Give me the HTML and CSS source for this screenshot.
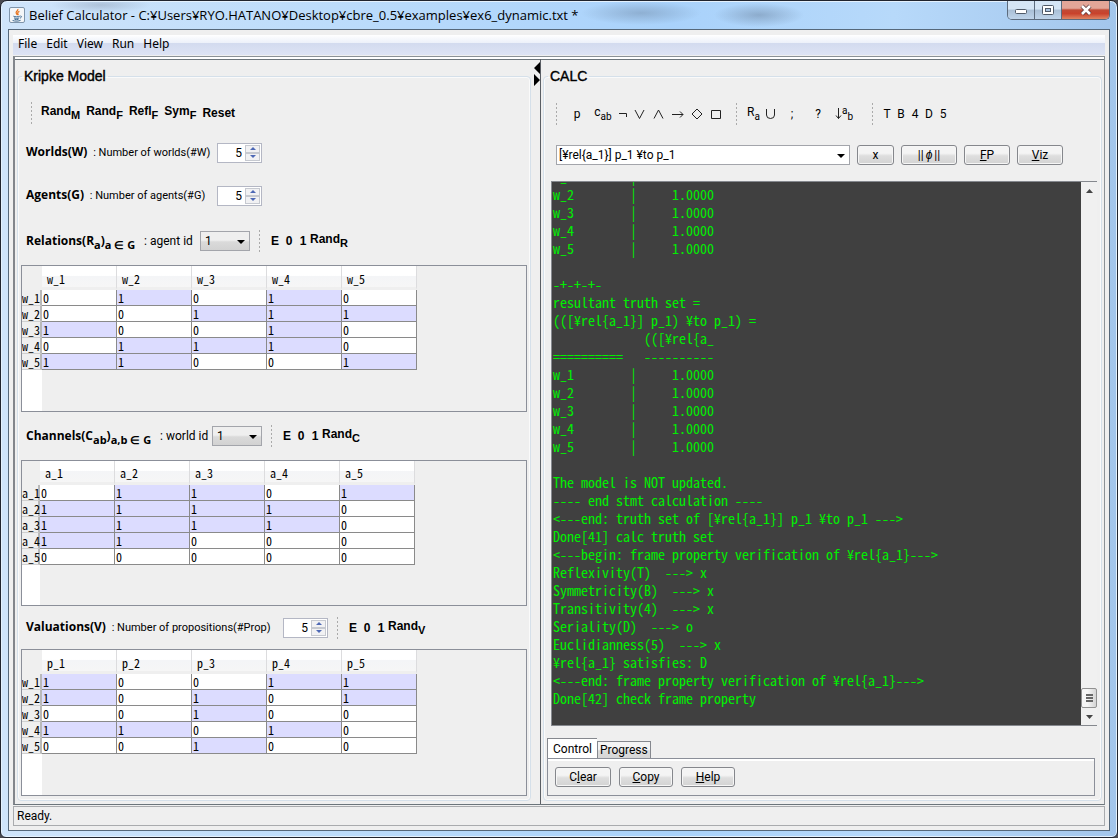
FILE: index.html
```html
<!DOCTYPE html>
<html lang="en">
<head>
<meta charset="utf-8">
<title>Belief Calculator</title>
<link rel="stylesheet" href="styles.css">
</head>
<body>
<div class="window">
  <header class="titlebar">
    <svg class="app-icon" viewBox="0 0 16 16" aria-hidden="true">
      <rect x="0.5" y="0.5" width="15" height="15" rx="1.5" fill="#f4f6f8" stroke="#7f95ab"/>
      <path d="M8.800 2c1 1.400-2.600 2.600-1.600 4.200.4.7 1 1 .8 2M10.400 4.400C8.600 5.200 8.400 6 9 6.800c.4.5.2 1-.2 1.400" fill="none" stroke="#e8731c" stroke-width="1.200"/>
      <path d="M4.400 9.200c1.600.8 4.800.8 6.400 0M5 10.900c1.400.6 4 .6 5.200 0M5.500 12.300c1.200.4 2.800.4 4 0M11.300 9c1.800-.2 1.400 1.600-.4 2.200M3.600 13.500c2.400.9 6.400.8 8-.2" fill="none" stroke="#3f6a92" stroke-width="1"/>
    </svg>
    <h1 class="title">Belief Calculator - C:¥Users¥RYO.HATANO¥Desktop¥cbre_0.5¥examples¥ex6_dynamic.txt *</h1>
    <div class="caption">
      <button class="cap cap-min" type="button" aria-label="Minimize"><svg width="14" height="12" viewBox="0 0 14 12"><rect x="1.500" y="5.500" width="11" height="4" rx="1" fill="#fff" stroke="#505a68"/></svg></button>
      <button class="cap cap-max" type="button" aria-label="Maximize"><svg width="14" height="12" viewBox="0 0 14 12"><rect x="1.500" y="1.500" width="11" height="9" rx="1" fill="#fff" stroke="#505a68"/><rect x="4.500" y="4.500" width="5" height="3" fill="#a9c3df" stroke="#505a68"/></svg></button>
      <button class="cap cap-close" type="button" aria-label="Close"><svg width="14" height="12" viewBox="0 0 14 12"><path d="M3 2l8 8M11 2l-8 8" stroke="#5e3a3c" stroke-width="4.200"/><path d="M3 2l8 8M11 2l-8 8" stroke="#fff" stroke-width="2.600"/></svg></button>
    </div>
  </header>

  <div class="client">
    <nav class="menubar">
      <button type="button">File</button>
      <button type="button">Edit</button>
      <button type="button">View</button>
      <button type="button">Run</button>
      <button type="button">Help</button>
    </nav>

    <main class="split">
      <fieldset class="panel model">
        <legend>Kripke Model</legend>
        <div class="tools model-tools">
          <span class="grip"></span>
          <button type="button">Rand<sub>M</sub></button>
          <button type="button">Rand<sub>F</sub></button>
          <button type="button">Refl<sub>F</sub></button>
          <button type="button">Sym<sub>F</sub></button>
          <button type="button" class="low">Reset</button>
        </div>

        <div class="row">
          <label class="label-count" for="worlds"><b>Worlds(W)</b> : Number of worlds(#W)</label>
          <span class="spinner"><input id="worlds" type="text" value="5"><span class="steps"><button type="button" class="up" aria-label="More worlds"></button><button type="button" class="down" aria-label="Fewer worlds"></button></span></span>
        </div>
        <div class="row">
          <label class="label-count" for="agents"><b>Agents(G)</b> : Number of agents(#G)</label>
          <span class="spinner"><input id="agents" type="text" value="5"><span class="steps"><button type="button" class="up" aria-label="More agents"></button><button type="button" class="down" aria-label="Fewer agents"></button></span></span>
        </div>

        <div class="row row-table">
          <label class="label-rel" for="agent-id"><b>Relations(R<sub>a</sub>)<sub>a ∈ G</sub></b> : agent id</label>
          <span class="pick"><select id="agent-id"><option>1</option></select><span class="caret"></span></span>
          <div class="tools rand-tools">
            <span class="grip"></span>
            <button type="button">E</button><button type="button">0</button><button type="button">1</button><button type="button" class="rand">Rand<sub>R</sub></button>
          </div>
        </div>
        <div class="grid-box gutter-w">
          <table>
            <colgroup><col class="head-w"><col><col><col><col><col></colgroup>
            <thead><tr><td></td><th scope="col">w_1</th><th scope="col">w_2</th><th scope="col">w_3</th><th scope="col">w_4</th><th scope="col">w_5</th></tr></thead>
            <tbody>
              <tr><th scope="row">w_1</th><td>0</td><td class="on">1</td><td>0</td><td class="on">1</td><td>0</td></tr>
              <tr><th scope="row">w_2</th><td>0</td><td>0</td><td class="on">1</td><td class="on">1</td><td class="on">1</td></tr>
              <tr><th scope="row">w_3</th><td class="on">1</td><td>0</td><td>0</td><td class="on">1</td><td>0</td></tr>
              <tr><th scope="row">w_4</th><td>0</td><td class="on">1</td><td class="on">1</td><td class="on">1</td><td>0</td></tr>
              <tr><th scope="row">w_5</th><td class="on">1</td><td class="on">1</td><td>0</td><td>0</td><td class="on">1</td></tr>
            </tbody>
          </table>
        </div>

        <div class="row row-table">
          <label class="label-chan" for="world-id"><b>Channels(C<sub>ab</sub>)<sub>a,b ∈ G</sub></b> : world id</label>
          <span class="pick"><select id="world-id"><option>1</option></select><span class="caret"></span></span>
          <div class="tools rand-tools">
            <span class="grip"></span>
            <button type="button">E</button><button type="button">0</button><button type="button">1</button><button type="button" class="rand">Rand<sub>C</sub></button>
          </div>
        </div>
        <div class="grid-box gutter-a">
          <table>
            <colgroup><col class="head-a"><col><col><col><col><col></colgroup>
            <thead><tr><td></td><th scope="col">a_1</th><th scope="col">a_2</th><th scope="col">a_3</th><th scope="col">a_4</th><th scope="col">a_5</th></tr></thead>
            <tbody>
              <tr><th scope="row">a_1</th><td>0</td><td class="on">1</td><td class="on">1</td><td>0</td><td class="on">1</td></tr>
              <tr><th scope="row">a_2</th><td class="on">1</td><td class="on">1</td><td class="on">1</td><td class="on">1</td><td>0</td></tr>
              <tr><th scope="row">a_3</th><td class="on">1</td><td class="on">1</td><td class="on">1</td><td class="on">1</td><td>0</td></tr>
              <tr><th scope="row">a_4</th><td class="on">1</td><td class="on">1</td><td>0</td><td>0</td><td>0</td></tr>
              <tr><th scope="row">a_5</th><td>0</td><td>0</td><td>0</td><td>0</td><td>0</td></tr>
            </tbody>
          </table>
        </div>

        <div class="row">
          <label class="label-val" for="props"><b>Valuations(V)</b> : Number of propositions(#Prop)</label>
          <span class="spinner"><input id="props" type="text" value="5"><span class="steps"><button type="button" class="up" aria-label="More propositions"></button><button type="button" class="down" aria-label="Fewer propositions"></button></span></span>
          <div class="tools rand-tools">
            <span class="grip"></span>
            <button type="button">E</button><button type="button">0</button><button type="button">1</button><button type="button" class="rand">Rand<sub>V</sub></button>
          </div>
        </div>
        <div class="grid-box gutter-w">
          <table>
            <colgroup><col class="head-w"><col><col><col><col><col></colgroup>
            <thead><tr><td></td><th scope="col">p_1</th><th scope="col">p_2</th><th scope="col">p_3</th><th scope="col">p_4</th><th scope="col">p_5</th></tr></thead>
            <tbody>
              <tr><th scope="row">w_1</th><td class="on">1</td><td>0</td><td>0</td><td class="on">1</td><td class="on">1</td></tr>
              <tr><th scope="row">w_2</th><td class="on">1</td><td>0</td><td class="on">1</td><td>0</td><td class="on">1</td></tr>
              <tr><th scope="row">w_3</th><td>0</td><td>0</td><td class="on">1</td><td>0</td><td>0</td></tr>
              <tr><th scope="row">w_4</th><td class="on">1</td><td class="on">1</td><td>0</td><td class="on">1</td><td>0</td></tr>
              <tr><th scope="row">w_5</th><td>0</td><td>0</td><td class="on">1</td><td>0</td><td>0</td></tr>
            </tbody>
          </table>
        </div>
      </fieldset>

      <div class="divider">
        <svg width="8" height="26" viewBox="0 0 8 26" aria-hidden="true"><path d="M7 2v12L1 8zM1 14v12l6-6z" fill="#000"/></svg>
      </div>

      <fieldset class="panel calc">
        <legend>CALC</legend>
        <div class="tools calc-tools">
          <span class="grip"></span>
          <button type="button" class="w26">p</button>
          <button type="button" class="w26"><span class="raise">c</span><sub>ab</sub></button>
          <button type="button" class="w14" aria-label="not"><svg width="10" height="12" viewBox="0 0 10 12"><path d="M1 5.500h7.500v3.500"/></svg></button>
          <button type="button" class="w19" aria-label="or"><svg width="11" height="12" viewBox="0 0 11 12"><path d="M1 2l4.500 8.500L10 2"/></svg></button>
          <button type="button" class="w19" aria-label="and"><svg width="11" height="12" viewBox="0 0 11 12"><path d="M1 10.500L5.500 2 10 10.500"/></svg></button>
          <button type="button" class="w19" aria-label="implies"><svg width="13" height="12" viewBox="0 0 13 12"><path d="M1 6.500h11M9 3.500l3 3-3 3"/></svg></button>
          <button type="button" class="w19" aria-label="diamond"><svg width="12" height="12" viewBox="0 0 12 12"><path d="M6 1l5 5-5 5-5-5z"/></svg></button>
          <button type="button" class="w19" aria-label="box"><svg width="12" height="12" viewBox="0 0 12 12"><path d="M1.500 2.500h9v8h-9z"/></svg></button>
          <span class="grip grip-mid"></span>
          <button type="button" class="w17"><span class="raise">R</span><sub>a</sub></button>
          <button type="button" class="w17" aria-label="union"><svg width="11" height="12" viewBox="0 0 11 12"><path d="M1.500 1v6q0 3.500 4 3.500t4-3.500V1"/></svg></button>
          <button type="button" class="w26">;</button>
          <button type="button" class="w26">?</button>
          <button type="button" class="w26"><svg width="7" height="12" viewBox="0 0 7 12"><path d="M3.500 0v10.500M1 7.500l2.500 3 2.500-3"/></svg><sup>a</sup><sub>b</sub></button>
          <span class="grip grip-end"></span>
          <button type="button" class="w14">T</button>
          <button type="button" class="w14">B</button>
          <button type="button" class="w14">4</button>
          <button type="button" class="w14">D</button>
          <button type="button" class="w14">5</button>
        </div>

        <div class="formula">
          <span class="pick wide"><select aria-label="Formula"><option>[¥rel{a_1}] p_1 ¥to p_1</option></select><span class="caret"></span></span>
          <button type="button" class="btn b37">x</button>
          <button type="button" class="btn b56 norm">||<i>ϕ</i>||</button>
          <button type="button" class="btn b46"><u>F</u>P</button>
          <button type="button" class="btn b46"><u>V</u>iz</button>
        </div>

        <div class="console">
          <pre class="log" tabindex="0">w_1        |     1.0000
w_2        |     1.0000
w_3        |     1.0000
w_4        |     1.0000
w_5        |     1.0000

-+-+-+-
resultant truth set =
(([¥rel{a_1}] p_1) ¥to p_1) =
             (([¥rel{a_
==========   ----------
w_1        |     1.0000
w_2        |     1.0000
w_3        |     1.0000
w_4        |     1.0000
w_5        |     1.0000

The model is NOT updated.
---- end stmt calculation ----
&lt;---end: truth set of [¥rel{a_1}] p_1 ¥to p_1 ---&gt;
Done[41] calc truth set
&lt;---begin: frame property verification of ¥rel{a_1}---&gt;
Reflexivity(T)  ---&gt; x
Symmetricity(B)  ---&gt; x
Transitivity(4)  ---&gt; x
Seriality(D)  ---&gt; o
Euclidianness(5)  ---&gt; x
¥rel{a_1} satisfies: D
&lt;---end: frame property verification of ¥rel{a_1}---&gt;
Done[42] check frame property</pre>
          <div class="scroll">
            <button type="button" class="arrow" aria-label="Scroll up"><svg width="7" height="4" viewBox="0 0 7 4"><path d="M0 4l3.500-4L7 4z" fill="#444"/></svg></button>
            <span class="thumb"><i></i><i></i><i></i></span>
            <button type="button" class="arrow" aria-label="Scroll down"><svg width="7" height="4" viewBox="0 0 7 4"><path d="M0 0l3.500 4L7 0z" fill="#444"/></svg></button>
          </div>
        </div>

        <div class="tabs">
          <button type="button" class="tab active">Control</button>
          <button type="button" class="tab">Progress</button>
        </div>
        <div class="tab-body">
          <button type="button" class="btn b56">C<u>l</u>ear</button>
          <button type="button" class="btn b54"><u>C</u>opy</button>
          <button type="button" class="btn b54"><u>H</u>elp</button>
        </div>
      </fieldset>
    </main>

    <footer class="status">Ready.</footer>
  </div>
</div>
</body>
</html>
```
FILE: styles.css
```css
* { box-sizing: border-box; }

body {
  margin: 0;
  height: 100vh;
  background: #4a4a50;
  color: #000;
  font: 12px/16px Roboto, "Noto Sans CJK JP", sans-serif;
}

button, input, select { font: inherit; color: inherit; margin: 0; padding: 0; border: 0; background: none; }
button { cursor: pointer; }

.window {
  display: flex;
  flex-direction: column;
  height: 100%;
  padding: 0 7px 6px;
  border: 1px solid #20242e;
  border-radius: 7px 7px 6px 6px;
  box-shadow: inset 0 0 0 1px #e4f1fd;
  background:
    radial-gradient(ellipse 60px 12px at 640px 12px, rgba(90, 110, 135, .35), transparent),
    radial-gradient(ellipse 45px 12px at 758px 14px, rgba(90, 110, 135, .4), transparent),
    radial-gradient(ellipse 50px 8px at 100px 4px, rgba(110, 120, 140, .3), transparent),
    linear-gradient(90deg, #cfe4fa, #bcdcfb 30%, #a9d2fb 60%, #b7d9fa 80%, #a3c6ec);
}

.titlebar { display: flex; align-items: center; height: 28px; padding-left: 1px; }
.app-icon { width: 16px; height: 16px; }
.title { margin: 0 auto 0 4px; font: 13px/20px "Open Sans", sans-serif; white-space: nowrap; }
.caption { display: flex; align-self: flex-start; height: 19px; border: 1px solid #5c6b7d; border-top: 0; border-radius: 0 0 5px 5px; overflow: hidden; }
.cap { display: flex; align-items: center; justify-content: center; width: 27px; border-right: 1px solid #5c6b7d; background: linear-gradient(#d5e5f5 45%, #a9bfd6 50%, #bfd4ea); }
.cap-close { width: 47px; border: 0; background: linear-gradient(#e3a698 40%, #c14a35 50%, #c9422c 70%, #e08562); }

.client { flex: 1; display: flex; flex-direction: column; min-height: 0; padding: 5px 4px 4px; border: 1px solid #56687a; background: #efefef; }
.menubar { display: flex; gap: 9px; height: 20px; padding: 0 5px; background: linear-gradient(#fff, #edf1fa 38%, #d3dbef 42%, #dde3f4); }
.menubar button { font: 12px/16px "Noto Sans", sans-serif; padding-bottom: 2px; }

.split {
  flex: 1;
  display: grid;
  grid-template-columns: 518fr 8px 563fr;
  min-height: 0;
  margin-top: 1px;
  padding-top: 2px;
  border: 1px solid #8b9196;
  border-bottom-color: #6c757b;
  border-left: 2px solid #82868c;
  box-shadow: inset 0 2px 0 #fff, inset 0 3px 0 #6c757b;
}

.panel { display: flex; flex-direction: column; min-width: 0; min-height: 0; margin: 8px 2px 3px; padding: 1px 3px 4px; border: 1px solid #d5e0ea; border-radius: 4px; box-shadow: inset 0 0 0 1px #fafafa; }
.panel legend { margin-left: 1px; padding: 0 2px; font: 14px/18px "Liberation Sans", sans-serif; -webkit-text-stroke: 0.4px #000; }

.divider { border-right: 1px solid #5a5e64; padding-top: 1px; }
.divider svg { display: block; }

.tools { display: flex; align-items: center; }
.grip { width: 3px; height: 24px; background: radial-gradient(circle, #aaa 1px, transparent 1px) 0 0 / 3px 4px; }
sub, sup { line-height: 0; font-size: 11px; }
sub { vertical-align: -4px; }
sup { vertical-align: 4px; }

.model-tools { gap: 6px; height: 36px; margin-top: 9px; padding-left: 9px; font: bold 12px/16px "Liberation Sans", sans-serif; }
.model-tools .grip { margin-right: 2px; }
.model-tools button { padding-bottom: 4px; }
.model-tools .low { padding: 0; }

.row { display: flex; align-items: center; height: 43px; padding-left: 5px; }
.row-table { height: 48px; }
.row label { font-size: 11px; white-space: nowrap; }
.row b { margin-right: 3px; font: bold 12px/16px "Open Sans", sans-serif; }
.row-table label { font-size: 12px; }
.row-table b { margin-right: 6px; }
.label-count { width: 191px; }
.label-rel { width: 174px; }
.label-chan { width: 186px; }
.label-val { width: 257px; }

.spinner { display: flex; width: 45px; height: 20px; padding: 1px; border: 1px solid #b4b7c4; background: #fff; }
.spinner input { flex: 1; width: 0; padding-right: 3px; text-align: right; }
.steps { display: flex; flex-direction: column; width: 15px; }
.steps button { flex: 1; display: flex; align-items: center; justify-content: center; border: 1px solid #c6c9d0; background: #f1f1f3; }
.steps button::after { content: ""; border: 3px solid transparent; }
.steps .up::after { border-top: 0; border-bottom-color: #4d68b5; }
.steps .down::after { border-bottom: 0; border-top-color: #4d68b5; }

.pick { position: relative; width: 50px; height: 20px; }
.pick select { appearance: none; width: 100%; height: 100%; padding-left: 4px; border: 1px solid #a3a5ab; background: linear-gradient(#efefef 45%, #dadada 55%, #d2d2d2); }
.caret { position: absolute; right: 5px; top: 9px; border: 4px solid transparent; border-top-color: #000; border-bottom: 0; pointer-events: none; }
.pick.wide { flex: 1; }
.wide select { padding-left: 2px; background: #fff; }

.rand-tools { margin-left: 8px; font: bold 12px/16px "Liberation Sans", sans-serif; }
.rand-tools .grip { margin-right: 7px; }
.rand-tools button { width: 14px; }
.rand-tools .rand { width: auto; padding-bottom: 4px; }

.grid-box { flex: 1; min-height: 0; overflow: hidden; border: 1px solid #8b8f99; }
.gutter-w { background: linear-gradient(90deg, #fff 20px, #efefef 20px); }
.gutter-a { background: linear-gradient(90deg, #fff 18px, #efefef 18px); }
table { table-layout: fixed; width: 0; border-collapse: separate; border-spacing: 0; background: #efefef; }
col { width: 75px; }
.head-w { width: 20px; }
.head-a { width: 18px; }
th, td { padding: 0; font: 12px/15px "Noto Sans Mono CJK JP", "Liberation Mono", monospace; text-align: left; white-space: nowrap; }
thead tr { height: 24px; }
thead th { padding: 3px 0 0 5px; border-right: 1px solid #dcdcde; border-bottom: 3px solid #efefef; background: linear-gradient(#fff 45%, #f4f5f7 50%, #f6f6f6); }
tbody td { height: 16px; padding-left: 1px; border: solid #8a8a8a; border-width: 0 1px 1px 0; background: #fff; }
tbody th { border-right: 2px solid #b9b9b9; border-bottom: 1px solid #d0d0d0; background: #efefef; }
tbody .on { background: #dcdcff; }

.calc-tools { height: 38px; margin-top: 9px; padding-left: 8px; }
.calc-tools button { display: flex; align-items: center; justify-content: center; height: 24px; }
.calc-tools path { fill: none; stroke: #222; stroke-width: 1; }
.calc-tools sub { padding-top: 6px; font-size: 10px; }
.calc-tools sup { padding-bottom: 6px; font-size: 10px; }
.calc-tools .raise { padding-bottom: 4px; }
.calc-tools .grip { margin-right: 6px; }
.calc-tools .grip-mid { margin: 0 7px 0 10px; }
.calc-tools .grip-end { margin: 0 6px 0 14px; }
.w14 { width: 14px; }
.w17 { width: 17px; }
.w19 { width: 19px; }
.w26 { width: 26px; }

.formula { display: flex; align-items: center; gap: 7px; height: 20px; margin: 12px 35px 0 9px; }
.btn { height: 20px; border: 1px solid #85878c; border-radius: 3px; background: linear-gradient(#f4f4f4 40%, #dedede 55%, #d3d3d3); box-shadow: inset 0 0 0 1px #f6f6f6; }
.norm i { padding: 0 2px; }
.b37 { width: 37px; }
.b46 { width: 46px; }
.b54 { width: 54px; }
.b56 { width: 56px; }

.console { flex: 1; display: flex; min-height: 0; margin: 16px 1px 0 4px; border: 1px solid #85888e; border-right: 0; }
.log { flex: 1; display: flex; flex-direction: column; justify-content: flex-end; min-width: 0; margin: 0; padding: 0 1px 18px; overflow: hidden; background: #404040; color: #00f000; font: 14px/18px "Noto Sans Mono CJK JP", "Liberation Mono", monospace; white-space: pre; }
.scroll { display: flex; flex-direction: column; width: 16px; background: #f0f0f0; }
.arrow { display: flex; align-items: center; justify-content: center; height: 17px; }
.thumb { display: flex; flex-direction: column; align-items: center; justify-content: center; gap: 1px; height: 20px; margin-top: auto; border: 1px solid #919191; border-radius: 2px; background: linear-gradient(90deg, #f6f6f6 40%, #d4d4d4); }
.thumb i { width: 7px; height: 2px; background: #666; }

.tabs { display: flex; align-items: flex-end; height: 20px; margin-top: 12px; }
.tab { height: 17px; padding: 0 2px; border: 1px solid #85888e; border-bottom: 0; background: linear-gradient(#f4f4f4 45%, #dcdcdc 55%, #d6d6d6); }
.tab.active { height: 20px; padding: 0 5px; border-right: 0; background: #fff; }
.tab-body { display: flex; gap: 8px; padding: 8px 7px; margin-right: 3px; border: 1px solid #8b8f99; box-shadow: inset 0 2px 0 #fff; }

.status { height: 20px; margin-top: 1px; padding-left: 3px; border: 1px solid #a9abae; line-height: 18px; }
```
